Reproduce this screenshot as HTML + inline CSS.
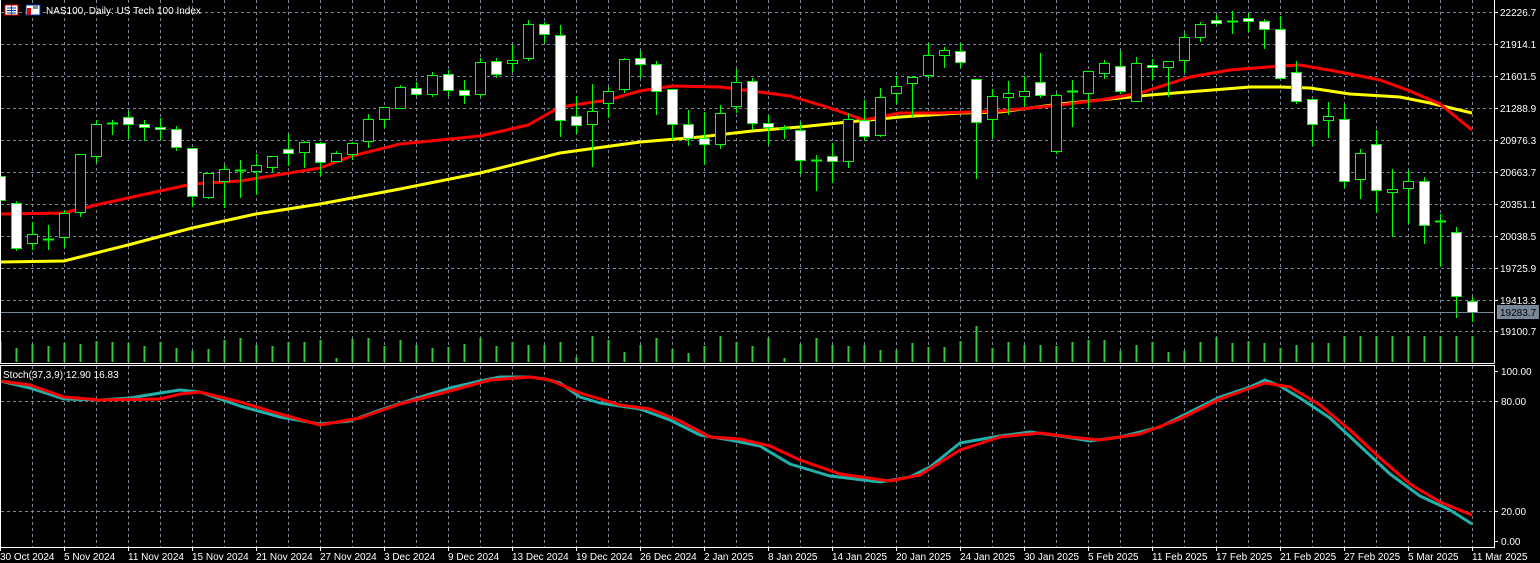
<!DOCTYPE html>
<html><head><meta charset="utf-8"><style>
html,body{margin:0;padding:0;background:#000;width:1540px;height:563px;overflow:hidden}
svg{display:block}
text{font-family:"Liberation Sans",sans-serif;font-size:10px;fill:#fff}
</style></head><body>
<svg id="s" width="1540" height="563" xmlns="http://www.w3.org/2000/svg">
<rect width="1540" height="563" fill="#000"/>
<g id="grid" stroke="#778899" stroke-dasharray="3,3" stroke-width="1"></g>
<g id="vol" stroke="#32cd32" stroke-width="2"></g>
<g id="ma" fill="none" stroke-width="3" stroke-linejoin="round"></g>
<g id="cd"></g>
<g id="st" fill="none" stroke-width="3" stroke-linejoin="round"></g>
<line x1="0" y1="312.5" x2="1494" y2="312.5" stroke="#778899"/>
<g stroke="#fff" stroke-width="1" fill="none">
<line x1="0.5" y1="0" x2="0.5" y2="363"/>
<line x1="0" y1="363.5" x2="1494.5" y2="363.5"/>
<line x1="1494.5" y1="0" x2="1494.5" y2="363.5"/>
<rect x="0.5" y="365.5" width="1494" height="182"/>
</g>
<g id="ticks" stroke="#fff"></g>
<g>
<text x="1500" y="16">22226.7</text>
<text x="1500" y="48">21914.1</text>
<text x="1500" y="80">21601.5</text>
<text x="1500" y="112">21288.9</text>
<text x="1500" y="144">20976.3</text>
<text x="1500" y="176">20663.7</text>
<text x="1500" y="208">20351.1</text>
<text x="1500" y="240">20038.5</text>
<text x="1500" y="272">19725.9</text>
<text x="1500" y="304">19413.3</text>
<text x="1500" y="335">19100.7</text>
<rect x="1497" y="305" width="42" height="14" fill="#778899"/>
<text x="1500" y="316" style="fill:#000">19283.7</text>
<text x="1501" y="375">100.00</text>
<text x="1501" y="405">80.00</text>
<text x="1501" y="515">20.00</text>
<text x="1501" y="545">0.00</text>
</g>
<text x="3" y="378">Stoch(37,3,9) 12.90 16.83</text>
<g>
<rect x="5" y="5" width="13" height="10" fill="#fff" stroke="#d00" stroke-width="1"/>
<line x1="7" y1="8" x2="16" y2="8" stroke="#0033aa"/><line x1="7" y1="10.5" x2="16" y2="10.5" stroke="#0033aa"/><line x1="7" y1="13" x2="16" y2="13" stroke="#0033aa"/>
<line x1="11.5" y1="5" x2="11.5" y2="15" stroke="#d00"/>
<rect x="26" y="5" width="14" height="10" fill="#fff" stroke="#0033aa"/>
<rect x="27" y="8" width="4" height="7" fill="#d00"/>
<rect x="33" y="5" width="5" height="4" fill="#778899"/>
<text x="46" y="14">NAS100, Daily:  US Tech 100 Index</text>
</g>
<g id="dates">
<text x="0" y="560">30 Oct 2024</text>
<text x="64" y="560">5 Nov 2024</text>
<text x="128" y="560">11 Nov 2024</text>
<text x="192" y="560">15 Nov 2024</text>
<text x="256" y="560">21 Nov 2024</text>
<text x="320" y="560">27 Nov 2024</text>
<text x="384" y="560">3 Dec 2024</text>
<text x="448" y="560">9 Dec 2024</text>
<text x="512" y="560">13 Dec 2024</text>
<text x="576" y="560">19 Dec 2024</text>
<text x="640" y="560">26 Dec 2024</text>
<text x="704" y="560">2 Jan 2025</text>
<text x="768" y="560">8 Jan 2025</text>
<text x="832" y="560">14 Jan 2025</text>
<text x="896" y="560">20 Jan 2025</text>
<text x="960" y="560">24 Jan 2025</text>
<text x="1024" y="560">30 Jan 2025</text>
<text x="1088" y="560">5 Feb 2025</text>
<text x="1152" y="560">11 Feb 2025</text>
<text x="1216" y="560">17 Feb 2025</text>
<text x="1280" y="560">21 Feb 2025</text>
<text x="1344" y="560">27 Feb 2025</text>
<text x="1408" y="560">5 Mar 2025</text>
<text x="1472" y="560">11 Mar 2025</text>
</g>
</svg>
<script>
var NS="http://www.w3.org/2000/svg";
function el(p,t,a){var e=document.createElementNS(NS,t);for(var k in a)e.setAttribute(k,a[k]);document.getElementById(p).appendChild(e);return e;}
[12,44,76,108,140,172,204,236,268,300,331,401,511].forEach(function(y){el("grid","line",{x1:1,y1:y+.5,x2:1494,y2:y+.5});});
for(var x=32;x<1494;x+=32){el("grid","line",{x1:x+.5,y1:0,x2:x+.5,y2:363});el("grid","line",{x1:x+.5,y1:366,x2:x+.5,y2:547});}
[12,44,76,108,140,172,204,236,268,300,331,371,401,511,541].forEach(function(y){el("ticks","line",{x1:1494,y1:y+.5,x2:1498,y2:y+.5});});
for(var i=0;i<24;i++){el("ticks","line",{x1:i*64+.5,y1:547,x2:i*64+.5,y2:551});}
var C=[[176,200,170,205],[203,248,201,251],[243,234,222,250],[239,239,225,250],[237,213,210,248],[212,154,154,217],[156,124,120,163],[123,123,120,135],[117,124,111,139],[124,127,120,141],
[127,129,118,140],[129,147,126,151],[148,196,148,207],[197,173,173,199],[181,169,165,208],[170,170,160,198],[171,165,154,195],[167,156,156,172],[149,153,134,166],[152,142,141,168],
[143,162,142,176],[161,153,151,161],[154,143,142,160],[141,119,114,148],[119,107,107,128],[108,87,85,109],[88,94,82,96],[94,75,72,97],[74,90,70,96],[90,95,80,104],
[94,62,58,97],[61,74,58,78],[63,60,45,72],[58,24,20,61],[24,34,22,43],[35,120,25,137],[116,125,96,134],[124,111,84,167],[103,91,87,118],[89,59,58,93],
[58,64,51,78],[64,91,61,115],[89,124,89,140],[124,138,110,146],[138,144,112,165],[144,113,105,149],[106,82,69,113],[81,123,78,130],[123,127,115,145],[128,128,125,139],
[130,160,122,174],[160,160,155,191],[156,161,143,183],[161,119,113,168],[120,136,100,141],[135,97,88,137],[93,86,76,104],[83,77,76,117],[75,55,43,78],[55,50,47,68],
[51,62,43,68],[79,122,79,179],[119,96,89,138],[97,93,81,115],[96,91,76,107],[82,95,53,98],[151,95,93,154],[91,91,80,127],[93,71,71,108],[73,63,60,79],
[66,91,51,94],[101,63,57,101],[65,67,59,80],[67,61,61,97],[60,37,33,73],[37,24,22,42],[20,23,15,25],[21,21,11,34],[18,21,13,32],[21,29,19,49],
[29,78,16,79],[72,101,61,104],[99,124,99,146],[120,116,102,138],[119,181,104,188],[179,153,149,199],[144,190,130,213],[192,189,169,237],[188,181,170,224],[181,225,177,244],
[221,221,214,267],[232,296,227,318],[301,312,297,322]];
C.forEach(function(c,i){var x=i*16;var o=c[0],cl=c[1],h=c[2],l=c[3];
var top=Math.min(o,cl),bot=Math.max(o,cl);
el("cd","line",{x1:x+.5,y1:h,x2:x+.5,y2:l,stroke:"#00ff00","stroke-width":1});
if(bot-top<1){el("cd","line",{x1:x-5,y1:top+.5,x2:x+6,y2:top+.5,stroke:"#00ff00","stroke-width":2});}
else el("cd","rect",{x:x-4.5,y:top+.5,width:10,height:bot-top,fill:cl>o?"#fff":"#000",stroke:"#00ff00","stroke-width":1});
});
var V=[21,20,17,16,19,17,14,14,16,19,20,21,16,20,18,24,20,17,19,20,17,16,4,18,17,14,20,17,19,18,16,20,17,22,16,18,24,22,5,19,18,20,21,17,22,26,19,23,22,20,16,21,22,25,24,22,19,17,21,17,20,16,11,16,12,20,17,19,22,17,20,36,18,24,22,17,20,14,19,16,13,17,14,10,11,15,12,9,13,15,11,13,15,14,16,20,18,20,22,21,24,26,25,24,25,24,22];
for(var i=0;i<93;i++){var h=V[(i*7)%V.length];if(i==61)h=36;if(i==21)h=4;if(i==39)h=10;if(i==56)h=12;if(i>=84)h=26;el("vol","line",{x1:i*16+.5,y1:362,x2:i*16+.5,y2:362-h});}
function poly(p,pts,col){el(p,"polyline",{points:pts.map(function(a){return a.join(",")}).join(" "),stroke:col});}
poly("ma",[[0,262],[64,261],[128,245],[192,228],[256,214],[320,204],[400,189],[480,173],[560,153],[640,142],[700,137],[752,131],[800,127],[848,122],[900,117],[960,113],[1000,112],[1060,104],[1100,100],[1150,95],[1200,91],[1250,87],[1280,87],[1310,88],[1350,94],[1400,97],[1430,103],[1472,113]],"#ffff00");
poly("ma",[[0,214],[64,213],[96,205],[160,191],[192,184],[240,181],[320,168],[352,156],[400,144],[480,136],[528,125],[560,107],[608,100],[640,91],[672,86],[720,87],[752,91],[790,96],[830,108],[864,120],[900,113],[940,113],[1000,111],[1060,105],[1100,100],[1140,93],[1190,77],[1230,70],[1280,66],[1300,65],[1340,72],[1380,80],[1410,91],[1440,104],[1472,130]],"#ff0000");
poly("st",[[0,381],[30,388],[64,399],[100,400],[130,398],[160,393],[180,390],[200,392],[240,406],[280,417],[320,424],[350,421],[380,410],[420,397],[450,388],[480,381],[500,377],[530,377],[545,379],[560,383],[580,397],[600,403],[640,409],[670,420],[700,435],[730,440],[760,446],[790,464],[830,476],[880,482],[910,477],[930,467],[960,443],[1000,436],[1030,432],[1060,436],[1090,441],[1120,437],[1160,427],[1190,412],[1220,397],[1250,387],[1265,380],[1280,386],[1300,398],[1330,418],[1360,446],[1390,474],[1420,496],[1450,510],[1472,524]],"#20b2aa");
poly("st",[[0,381],[30,385],[64,397],[100,400],[160,399],[180,394],[200,392],[240,402],[280,414],[320,425],[360,418],[400,404],[450,391],[490,380],[530,377],[550,380],[580,393],[620,405],[650,409],[680,421],[710,437],[740,439],[770,446],[800,460],[840,474],[890,481],[920,475],[960,450],[1000,437],[1040,433],[1070,437],[1100,440],[1140,434],[1180,419],[1220,399],[1265,383],[1290,387],[1320,405],[1350,430],[1380,458],[1410,484],[1440,502],[1472,515]],"#ff0000");
</script>
</body></html>
